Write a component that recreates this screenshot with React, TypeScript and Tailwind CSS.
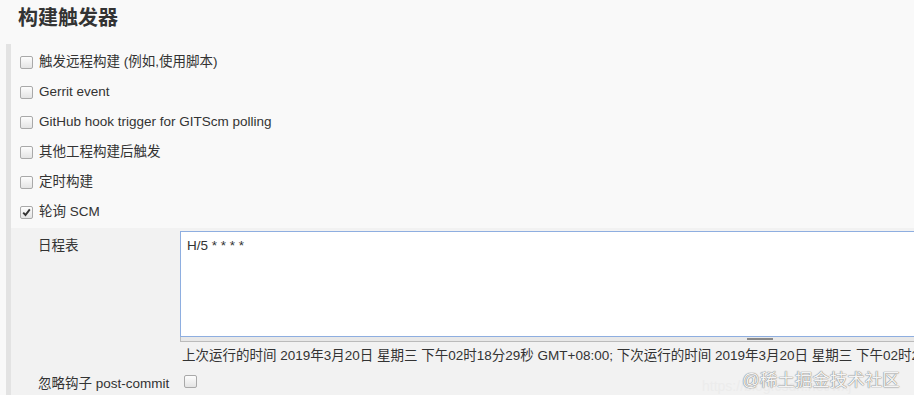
import React from 'react';

const Box: React.FC<{ checked?: boolean }> = ({ checked }) => (
  <span className="inline-flex h-[13px] w-[13px] shrink-0 items-center justify-center rounded-[2px] border border-[#a9a9a9] bg-gradient-to-b from-[#fdfdfd] to-[#e4e4e4]">
    {checked && (
      <svg width="9" height="9" viewBox="0 0 9 9">
        <path d="M1.2 4.6 L3.5 7 L7.8 1.4" fill="none" stroke="#333" strokeWidth="1.9" />
      </svg>
    )}
  </span>
);

const triggers = [
  { label: '触发远程构建 (例如,使用脚本)' },
  { label: 'Gerrit event' },
  { label: 'GitHub hook trigger for GITScm polling' },
  { label: '其他工程构建后触发' },
  { label: '定时构建' },
  { label: '轮询 SCM', checked: true },
];

export default function App() {
  return (
    <div className="relative h-[406px] w-[914px] overflow-hidden bg-white font-['Liberation_Sans','Noto_Sans_CJK_SC',sans-serif] text-[13.5px] text-[#333]">
      <div className="h-[395px] bg-[#f9f9f9]">
        {/* Section title */}
        <h2 className="pl-[18px] pt-[4px] text-[20px] font-bold leading-[28px] text-[#333]">构建触发器</h2>

        <div className="ml-[6px] mt-[12px] h-[351px] border-l-[5px] border-[#e3e3e3]">
          <div className="pt-[3px]">
            {triggers.map((t) => (
              <div key={t.label} className="flex h-[30px] items-center pl-[9px]">
                <Box checked={t.checked} />
                <span className="ml-[6px]">{t.label}</span>
              </div>
            ))}
          </div>

          {/* Poll SCM settings */}
          <div className="mt-[1px] h-[167px] bg-[#f2f2f2] pt-[3px]">
            <div className="flex">
              <div className="w-[169px] shrink-0 pl-[27px] pt-[5px]">日程表</div>
              <div className="w-[1160px] shrink-0">
                <textarea
                  readOnly
                  defaultValue="H/5 * * * *"
                  className="block h-[106px] w-full resize-none border border-[#8eaee0] bg-white px-[6px] py-[4px] font-['Liberation_Sans','Noto_Sans_CJK_SC',sans-serif] text-[13.5px] text-[#333] outline-none"
                />
                <div className="flex h-[5px] justify-center border border-t-0 border-[#bbb] bg-[#e8e8e8]">
                  <div className="mt-[1px] h-[2px] w-[26px] border-y border-[#888]" />
                </div>
              </div>
            </div>
            <div className="ml-[171px] mt-[6px] whitespace-nowrap leading-[16px]">
              上次运行的时间 2019年3月20日 星期三 下午02时18分29秒 GMT+08:00; 下次运行的时间 2019年3月20日 星期三 下午02时23分29秒 GMT+08:00.
            </div>
            <div className="mt-[10px] flex items-center">
              <div className="w-[169px] shrink-0 pl-[27px]">忽略钩子 post-commit</div>
              <div className="pl-[4px]">
                <Box />
              </div>
            </div>
          </div>
        </div>
      </div>

      {/* Watermark */}
      <div className="pointer-events-none absolute left-[702px] top-[378px] whitespace-nowrap text-[14px] leading-[16px] text-[#ececec]">
        https://blog.csdn.net/wxj
      </div>
      <div className="pointer-events-none absolute left-[742px] top-[369px] whitespace-nowrap text-[17.5px] leading-[22px] text-[#f4f4f4] [text-shadow:0_0_1px_#777,0_0_1px_#777]">
        @稀土掘金技术社区
      </div>
    </div>
  );
}
